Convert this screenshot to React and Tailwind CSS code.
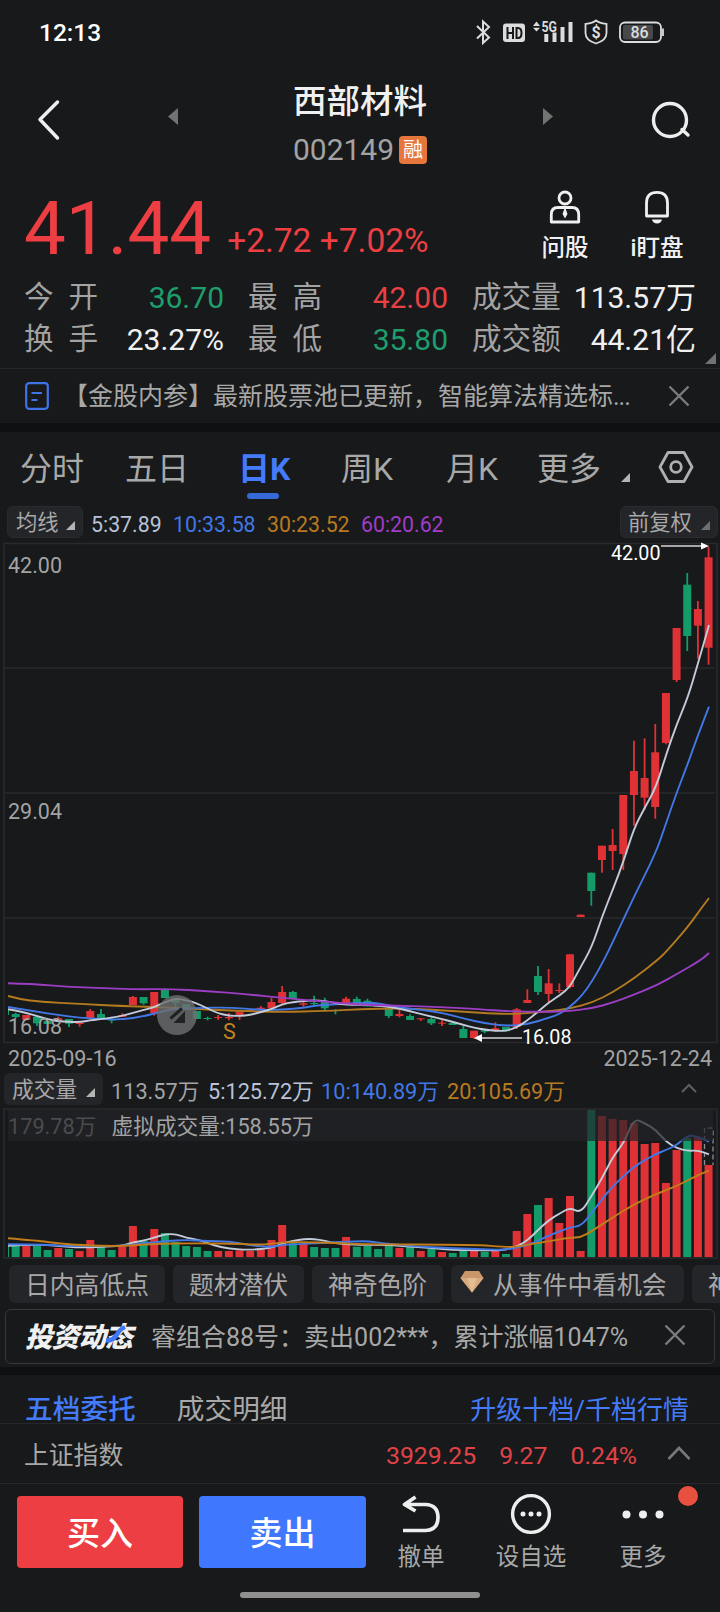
import React from "react";

const RED = "#e03236";
const GREEN = "#139c69";

// one row per day: up/down, body top, body bottom, high, low, volume bar height
const days = [
  ["g", 1010, 1015, 1010, 1015, 12],
  ["g", 1014, 1017, 1012.7, 1018.3, 12],
  ["r", 1015, 1020, 1015, 1020, 11],
  ["g", 1016.7, 1023.3, 1016, 1026, 11.3],
  ["g", 1021, 1024, 1021, 1024, 7],
  ["r", 1018.3, 1020, 1016.7, 1020, 9],
  ["g", 1019, 1023.7, 1019, 1027, 8],
  ["r", 1022.7, 1024, 1022, 1026.7, 6],
  ["r", 1011, 1018.7, 1009, 1020, 17],
  ["g", 1014, 1018.7, 1009, 1019, 10.3],
  ["g", 1019.5, 1020.5, 1016.7, 1023.3, 7],
  ["r", 1015, 1017, 1013.3, 1017, 10.3],
  ["r", 997, 1005, 996, 1005, 31],
  ["g", 997, 1003.3, 997, 1004.7, 16],
  ["r", 992, 1013, 992, 1015.7, 28],
  ["g", 990, 998, 988.3, 998, 24],
  ["g", 998, 1003, 998, 1010, 15],
  ["g", 1004, 1010, 1004, 1010, 11],
  ["g", 1011, 1019, 1011, 1019, 10],
  ["g", 1018, 1019, 1016.7, 1020.3, 6],
  ["r", 1017, 1018, 1015, 1020, 6],
  ["r", 1017, 1018.3, 1013, 1020.3, 6],
  ["r", 1011.7, 1015, 1011.7, 1020, 6.7],
  ["r", 1010, 1011, 1010, 1011, 6],
  ["r", 1007.7, 1009.7, 1006, 1011, 8.7],
  ["r", 1002, 1008.3, 997.7, 1009, 17],
  ["r", 992, 1003, 986, 1004.3, 32],
  ["g", 992, 998.7, 991, 999.3, 15.3],
  ["r", 1003.3, 1004.7, 1001.3, 1006.7, 13],
  ["g", 1003, 1004, 995.7, 1005.7, 10],
  ["g", 1001.7, 1008.3, 997.7, 1010.7, 9],
  ["g", 1010, 1011, 1009.3, 1014.3, 9],
  ["r", 998.7, 1005, 996.7, 1005, 20],
  ["g", 999, 1005, 996.7, 1005, 10.3],
  ["g", 1000.7, 1006.3, 998.7, 1006.3, 11],
  ["g", 1005, 1006.5, 1005, 1006.5, 8],
  ["g", 1008.3, 1016, 1008.3, 1018, 11],
  ["r", 1014, 1016, 1010, 1017.3, 9],
  ["g", 1016, 1020, 1014.3, 1020, 10.3],
  ["r", 1018.3, 1019.3, 1018.3, 1021, 6],
  ["g", 1019, 1023.3, 1017.3, 1025, 8],
  ["r", 1022.7, 1023.7, 1020.3, 1026, 5],
  ["g", 1023, 1025, 1022.7, 1025, 4],
  ["g", 1029, 1038, 1026, 1038, 7],
  ["r", 1030.7, 1038, 1030.7, 1039, 6],
  ["g", 1030.3, 1031.7, 1029.7, 1033.3, 5.3],
  ["r", 1028.3, 1030.7, 1022.3, 1031.7, 7],
  ["g", 1027, 1031.3, 1027, 1031.3, 3],
  ["r", 1009.3, 1027, 1008, 1029, 26],
  ["r", 1000, 1003, 989.3, 1003, 43],
  ["g", 976, 992, 966, 995, 52],
  ["r", 983.3, 994, 969, 1002, 59],
  ["r", 990, 991, 983.3, 993, 34],
  ["r", 954.3, 987, 954.3, 988.3, 61],
  ["r", 914.7, 917, 914.7, 917, 6],
  ["g", 872.7, 891, 872.7, 905.7, 147],
  ["r", 845.7, 860, 845.7, 872.7, 141],
  ["r", 845, 851, 829, 870, 138],
  ["r", 795, 854, 795, 870, 137],
  ["r", 771, 795, 740.7, 825.7, 134],
  ["r", 778, 797.7, 738.3, 810, 113],
  ["r", 752.3, 807, 724, 818.7, 114],
  ["r", 693, 743, 693, 744.3, 74],
  ["r", 628, 680, 628, 682, 107],
  ["g", 584.7, 636, 573, 651, 119],
  ["r", 609, 625.7, 601, 658.7, 119.7],
  ["r", 557.3, 647.7, 546.7, 664.7, 92],
];

const dayX = (i) => 5 + i * 10.66;

const priceLines = [
  {
    color: "#b37a1f",
    points: "8,996 20,999.3 40,1001.7 80,1004 122,1006 154,1007 197,1009 240,1011 282,1012 325,1011 360,1009.3 400,1008.3 432,1009.7 464,1011.7 496,1013.7 517,1014 549,1011.3 570,1008.7 592,1002.7 613,992.3 634,978.3 657,960.5 666,952 688,926.7 700,910 709,898",
  },
  {
    color: "#4278e6",
    points: "8,1007 37,1011.7 58,1015 80,1017.7 101,1019 122,1019.7 144,1016.3 165,1010.7 176,1008.7 197,1008 229,1007.3 261,1010 282,1009.7 304,1007.7 314,1005.7 336,1004.3 357,1003 368,1002.7 378,1003.3 400,1007.7 421,1009.7 442,1012.7 464,1018.7 485,1023.3 506,1026 528,1024.3 549,1017.7 560,1014 570,1006.7 581,996.7 592,981.7 604,960 613,941.7 634,896.7 656,852.7 666,823.3 677,791.7 688,763.3 698,735 709,706.7",
  },
  {
    color: "#c3cad9",
    points: "8,1009.3 16,1010.7 26,1012.7 37,1016 48,1019.3 58,1021.3 80,1022.3 90,1020.3 101,1019.3 122,1016 133,1012.7 144,1010 154,1007.3 165,1002 176,998.7 186,1000 197,1003.3 208,1008.7 218,1013.3 229,1015.7 240,1016 250,1015 261,1012 272,1009 282,1004.3 293,1002 304,1001 314,1000.3 325,1001 336,1003.3 346,1004.7 368,1004.7 389,1007 400,1008.7 410,1011.3 421,1014 432,1016.7 442,1019 453,1022 464,1025 474,1027.7 485,1029.7 496,1030.7 506,1031 517,1027.3 528,1020 538,1011.7 549,1002.3 560,995.3 570,986.7 579,970 592,946.7 602,916.7 613,889.3 624,860 634,828.3 645,807.3 656,787.3 666,755 677,723.3 688,697.3 698,663.3 709,625",
  },
  {
    color: "#9b3ec4",
    points: "8,983.3 33,984 67,986.7 100,988 133,989.3 170,989 207,991 247,994.3 283,998 320,1001.3 360,1004.7 400,1005.7 440,1007 480,1009.3 507,1011.3 547,1012 570,1011 592,1008.3 613,1002.7 634,994.7 656,985.7 677,974 701,960 709,953",
  },
];

const volumeLines = [
  {
    color: "#c3cad9",
    points: "8,1245.7 37,1244.3 58,1246 80,1247.7 101,1246.7 122,1246 133,1242.3 144,1240.7 154,1237.7 165,1234.3 176,1234 186,1237.7 200,1240 213,1245.3 229,1248.7 250,1250 272,1248 282,1243.3 293,1241 304,1239 314,1239 325,1240.7 336,1243.7 360,1244.7 389,1245 410,1246.7 432,1248 453,1250 475,1250.3 496,1250.3 506,1249.7 517,1246.7 528,1240 538,1230 549,1220 560,1213.3 570,1207.7 581,1213 592,1195 602,1178.3 613,1156.7 624,1142.7 634,1118.3 645,1123.3 656,1130 666,1141.7 677,1148.3 688,1151 698,1150.3 709,1154.3",
  },
  {
    color: "#4278e6",
    points: "8,1244.3 50,1244.7 67,1246 122,1246 144,1243.3 165,1241.3 187,1239.7 208,1241.3 229,1241.3 250,1245.3 272,1247.3 282,1244.7 304,1244 325,1242.7 357,1241.3 368,1241.3 389,1244 421,1246.7 453,1248.3 485,1249.3 506,1250 528,1245 538,1241 549,1235.3 560,1231.3 570,1227.3 581,1226 592,1212.7 602,1199.3 613,1186 624,1175.7 634,1166.7 645,1160 656,1154 666,1150 677,1145 688,1135 698,1136.7 709,1141.7",
  },
  {
    color: "#c27d18",
    points: "8,1238.3 37,1240.7 58,1243.3 80,1245.3 122,1246.3 154,1243.7 197,1243.3 240,1243.7 261,1245 282,1242.3 304,1242 336,1243 360,1244.3 475,1244.7 506,1247 517,1246.7 549,1241 570,1237.7 581,1237.3 592,1231 613,1217.3 634,1204.3 656,1194 677,1186 698,1175 709,1170.7",
  },
];

// smooth a list of "x,y" pairs with quadratic segments through the midpoints
const smooth = (points) => {
  const p = points.split(" ").map((s) => s.split(",").map(Number));
  let d = `M${p[0][0]} ${p[0][1]}`;
  for (let i = 1; i < p.length - 1; i++) {
    const mx = (p[i][0] + p[i + 1][0]) / 2;
    const my = (p[i][1] + p[i + 1][1]) / 2;
    d += ` Q${p[i][0]} ${p[i][1]} ${mx} ${my}`;
  }
  const last = p[p.length - 1];
  return `${d} L${last[0]} ${last[1]}`;
};

const Corner = ({ className = "", color = "#b4b4b4", size = 9 }) => (
  <svg width={size} height={size} viewBox="0 0 10 10" className={`shrink-0 ${className}`}>
    <path d="M10 0V10H0Z" fill={color} />
  </svg>
);

const Close = ({ className = "", color = "#7b7c7e" }) => (
  <svg width="22" height="22" viewBox="0 0 22 22" className={`shrink-0 ${className}`}>
    <path d="M1.5 1.5L20.5 20.5M20.5 1.5L1.5 20.5" stroke={color} strokeWidth="2.4" fill="none" />
  </svg>
);

const StatusBar = () => (
  <div className="h-16 flex items-center pl-[39px] pr-[55px] text-white">
    <span className="pt-[2px] text-[24.5px] leading-none font-medium">12:13</span>
    <svg width="190" height="28" viewBox="476 18 190 28" className="ml-auto" fill="none" stroke="#dcdcdc">
      <path d="M478 26L490 37.5L484 43V21.5L490 27L478 38.5" strokeWidth="2" />
      <rect x="504" y="23.5" width="22" height="18.5" rx="3" fill="#dcdcdc" stroke="none" />
      <path d="M508.5 27V39M514 27V39M508.5 33H514M517.5 28V38H519C521.5 38 522.5 36.5 522.5 33S521.5 28 519 28Z" stroke="#17191a" strokeWidth="2" />
      <path d="M534 26L537.5 21.5L541 26ZM534 27.8H541L537.5 31.5Z" fill="#dcdcdc" stroke="none" />
      <text x="542.5" y="31.5" fontSize="14.5" fontWeight="700" fill="#dcdcdc" stroke="none" textLength="15.5" lengthAdjust="spacingAndGlyphs">5G</text>
      <path d="M547.3 34V42M555.5 32.5V42M563.5 27V42M571.5 22V42" strokeWidth="4" />
      <path d="M597 20.5C600 23 604 23.5 607.5 24V33C607.5 38.5 602 42 597 43.5C592 42 586.5 38.5 586.5 33V24C590 23.5 594 23 597 20.5Z" strokeWidth="1.8" />
      <text x="597" y="38" fontSize="16" fontWeight="700" fill="#dcdcdc" stroke="none" textAnchor="middle">$</text>
      <rect x="621" y="22.5" width="41" height="19.5" rx="5" strokeWidth="1.8" />
      <rect x="624" y="25" width="30" height="14.5" rx="2" fill="#47484a" stroke="none" />
      <path d="M664 28.5V36" strokeWidth="1.8" />
      <text x="640.5" y="38" fontSize="16" fontWeight="500" fill="#dcdcdc" stroke="none" textAnchor="middle">86</text>
    </svg>
  </div>
);

const Header = () => (
  <div className="h-[116px] flex items-start justify-between pl-[37px] pr-[28px]">
    <svg width="24" height="42" viewBox="0 0 24 42" className="mt-[35px]">
      <path d="M20.5 3L3 20.5L20.5 39" stroke="#eee" strokeWidth="3.5" strokeLinecap="round" strokeLinejoin="round" fill="none" />
    </svg>
    <svg width="10" height="17" viewBox="0 0 10 17" className="mt-11 ml-[56px]">
      <path d="M10 0V17L0 8.5Z" fill="#737373" />
    </svg>
    <div className="w-[144px] ml-[60px] flex flex-col items-center">
      <h1 className="mt-[18px] text-[33.5px] leading-[40px] font-medium text-[#f0f0f0] whitespace-nowrap">西部材料</h1>
      <div className="mt-[7px] flex items-center gap-[5px]">
        <span className="pt-px text-[30px] leading-[40px] text-[#a3a3a3]">002149</span>
        <span className="size-7 rounded bg-[#e6763c] text-[20px] leading-[29px] text-center text-white">融</span>
      </div>
    </div>
    <svg width="10" height="17" viewBox="0 0 10 17" className="mt-11 ml-[60px]">
      <path d="M0 0V17L10 8.5Z" fill="#737373" />
    </svg>
    <svg width="42" height="40" viewBox="0 0 42 40" className="mt-9 ml-[47px]" fill="none" stroke="#eee" strokeWidth="3.4">
      <circle cx="20" cy="20" r="16.5" />
      <path d="M32 29.5L38 35" strokeLinecap="round" />
    </svg>
  </div>
);

const Price = () => (
  <div className="h-[88px] flex pl-[24px]">
    <div className="flex items-baseline text-[#ed3f43] whitespace-nowrap w-[516px] pt-1">
      <span className="text-[74.5px] leading-[90px]">41.44</span>
      <span className="ml-[16px] text-[33.5px] relative top-[-2px]">+2.72 +7.02%</span>
    </div>
    <div className="w-[50px] pt-[10px] flex flex-col items-center text-[#f0f0f0]">
      <svg width="32" height="34" viewBox="0 0 32 34" fill="none" stroke="#f0f0f0" strokeWidth="2.8">
        <circle cx="16" cy="8" r="6" />
        <path d="M2.3 32V24.5Q2.3 17.5 9 17.5H23Q29.7 17.5 29.7 24.5V32Z" strokeLinejoin="round" />
        <path d="M16 17L18.5 24L16 28.5L13.5 24Z" fill="#f0f0f0" stroke="none" />
      </svg>
      <span className="mt-[8px] text-[23.5px] leading-[32px] font-medium whitespace-nowrap">问股</span>
    </div>
    <div className="ml-[39px] w-[56px] pt-[10px] flex flex-col items-center text-[#f0f0f0]">
      <svg width="28" height="34" viewBox="0 0 28 34" fill="none" stroke="#f0f0f0" strokeWidth="2.8">
        <path d="M3.5 26V13Q3.5 2.3 14 2.3T24.5 13V26Z" strokeLinejoin="round" />
        <path d="M9 29.5H19Q18 33.5 14 33.5T9 29.5Z" fill="#f0f0f0" stroke="none" />
      </svg>
      <span className="mt-[8px] text-[23.5px] leading-[32px] font-medium whitespace-nowrap">i盯盘</span>
    </div>
  </div>
);

const quotes = [
  [["今", "开", "36.70", "text-[#1f9e6d]"], ["最", "高", "42.00", "text-[#e64145]"], ["成交量", "", "113.57万", "text-[#f0f0f0]"]],
  [["换", "手", "23.27%", "text-[#f0f0f0]"], ["最", "低", "35.80", "text-[#1f9e6d]"], ["成交额", "", "44.21亿", "text-[#f0f0f0]"]],
];

const Quotes = () => (
  <div className="relative h-[101px] pt-[9px] pl-[24px] pr-[24px] border-b border-[#27282b]">
    {quotes.map((row, i) => (
      <div key={i} className="h-[42.3px] grid grid-cols-[200px_200px_1fr] gap-x-6 items-center text-[30px] leading-none whitespace-nowrap">
        {row.map(([a, b, value, color]) => (
          <div key={a + b} className="flex justify-between">
            <span className="flex gap-[15px] text-[29.6px] text-[#a3a3a3]">
              <span>{a}</span>
              {b && <span>{b}</span>}
            </span>
            <span className={color}>{value}</span>
          </div>
        ))}
      </div>
    ))}
    <Corner className="absolute right-1 bottom-[4px]" size={11} color="#737373" />
  </div>
);

const Notice = () => (
  <div className="h-[54px] flex items-center pl-[25px] pr-[30px]">
    <svg width="24" height="28" viewBox="0 0 24 28" fill="none" stroke="#3f73e8" strokeWidth="2.2">
      <rect x="1.2" y="1.2" width="21.6" height="25.6" rx="3" />
      <path d="M6.5 11H17M6.5 18H12.5" />
    </svg>
    <span className="ml-[14px] w-[580px] pt-[2px] text-[25px] leading-[36px] text-[#a8a8a8] whitespace-nowrap">
      【金股内参】最新股票池已更新，智能算法精选标<span className="tracking-[-1px]">...</span>
    </span>
    <Close className="ml-auto" />
  </div>
);

const Tabs = () => (
  <div className="h-[74px] flex text-[32px] leading-[74px] text-[#a8a8a8] whitespace-nowrap pl-[20px]">
    <span className="w-[105px]">分时</span>
    <span className="w-[113px]">五日</span>
    <span className="relative w-[103px] font-bold text-[#437bfb]">
      日K
      <span className="absolute left-[9px] bottom-[7px] w-8 h-[6px] rounded-full bg-[#3569d8]" />
    </span>
    <span className="w-[105px]">周K</span>
    <span className="w-[91px]">月K</span>
    <span>更多</span>
    <Corner className="ml-[20px] mt-[41px]" />
    <svg width="36" height="34" viewBox="0 0 36 34" className="ml-[28px] mt-[18px]" fill="none" stroke="#b0b0b0" strokeWidth="2.8" strokeLinejoin="round">
      <path d="M10 2.5H26L34 17L26 31.5H10L2 17Z" />
      <circle cx="18" cy="17" r="5.3" />
    </svg>
  </div>
);

const Averages = () => (
  <div className="h-[34px] flex items-start pl-[7px] pr-[2px] text-[21.3px] leading-[32px] whitespace-nowrap">
    <div className="w-[76px] h-8 rounded-md bg-[#242528] border border-[#2a2b2e] flex items-center pl-[8px] text-[#a8a8a8]">
      <span className="pt-[2px]">均线</span>
      <Corner className="ml-[7px] mt-[6px]" />
    </div>
    <span className="ml-2 w-[82px] pt-[3px] text-[#b9c2d8]">5:37.89</span>
    <span className="w-[94px] pt-[3px] text-[#4278e6]">10:33.58</span>
    <span className="w-[94px] pt-[3px] text-[#b87a20]">30:23.52</span>
    <span className="pt-[3px] text-[#a03cc8]">60:20.62</span>
    <div className="ml-auto w-[98px] h-8 rounded-md bg-[#242528] border border-[#2a2b2e] flex items-center pl-[7px] text-[#a8a8a8]">
      <span className="pt-[2px]">前复权</span>
      <Corner className="ml-[9px] mt-[6px]" color="#6f6f6f" />
    </div>
  </div>
);

const CandleChart = () => (
  <svg width="720" height="507" viewBox="0 540 720 507" className="block">
    <g fill="none" stroke="#292a2d" strokeWidth="1.6">
      <rect x="4" y="543.5" width="713" height="499" />
      <path d="M4 668H715M4 793H715M4 918H715" />
    </g>
    <clipPath id="plot">
      <rect x="8" y="540" width="706" height="505" />
    </clipPath>
    <g clipPath="url(#plot)">
      {days.map(([dir, top, bottom, high, low], i) => (
        <g key={i} fill={dir === "r" ? RED : GREEN}>
          <rect x={dayX(i) - 4} y={top} width="8" height={bottom - top} />
          <rect x={dayX(i) - 0.9} y={high} width="1.8" height={low - high} />
        </g>
      ))}
    </g>
    <g fill="none" strokeWidth="1.9" strokeLinejoin="round">
      {priceLines.map(({ color, points }) => (
        <path key={color} d={smooth(points)} stroke={color} />
      ))}
    </g>
    <circle cx="177" cy="1015" r="20" fill="#6d6e6f" fillOpacity="0.8" />
    <path d="M170.5 1018.5L182 1008.5" stroke="#202122" strokeWidth="3" />
    <path d="M185 1011V1023H173.5Z" fill="#202122" />
    <g fontSize="21.5" fill="#a3a3a3">
      <text x="8" y="573">42.00</text>
      <text x="8" y="819">29.04</text>
      <text x="8" y="1034">16.08</text>
      <text x="223" y="1039" fill="#c5841f">S</text>
      <text x="611" y="560" fill="#fff" fontSize="19.7">42.00</text>
      <text x="522" y="1044" fill="#fff" fontSize="19.7">16.08</text>
    </g>
    <path d="M661 546H702M482 1038H522" stroke="#a5a5a5" strokeWidth="1.8" />
    <path d="M701 542.5L709 546L701 549.5ZM482 1034L474 1038L482 1042Z" fill="#fff" />
  </svg>
);

const VolumeHeader = () => (
  <>
    <div className="h-[26px] px-2 flex justify-between text-[21.5px] leading-[24px] text-[#a3a3a3]">
      <span>2025-09-16</span>
      <span>2025-12-24</span>
    </div>
    <div className="h-[34px] flex items-start pl-1 pr-[23px] text-[21.7px] leading-[32px] whitespace-nowrap">
      <div className="w-[99px] h-8 rounded-md bg-[#242528] flex items-center pl-[8px] text-[#a8a8a8]">
        <span className="pt-[2px]">成交量</span>
        <Corner className="ml-[9px] mt-[6px]" />
      </div>
      <span className="ml-[8px] w-[97px] pt-[3px] text-[#a3a3a3]">113.57万</span>
      <span className="w-[113px] pt-[3px] text-[#b9c2d8]">5:125.72万</span>
      <span className="w-[126px] pt-[3px] text-[#4278e6]">10:140.89万</span>
      <span className="pt-[3px] text-[#b87a20]">20:105.69万</span>
      <svg width="16" height="10" viewBox="0 0 16 10" className="ml-auto mt-[10px]">
        <path d="M1 9L8 2L15 9" fill="none" stroke="#5c5f66" strokeWidth="2" />
      </svg>
    </div>
  </>
);

const VolumeChart = () => (
  <svg width="720" height="153" viewBox="0 1107 720 153" className="block">
    <rect x="4" y="1109" width="713" height="149" fill="none" stroke="#292a2d" strokeWidth="1.6" />
    <clipPath id="volume">
      <rect x="8" y="1109" width="706" height="149" />
    </clipPath>
    <g clipPath="url(#volume)">
      {days.map((day, i) => (
        <rect key={i} x={dayX(i) - 4} y={1257 - day[5]} width="8" height={day[5]} fill={day[0] === "r" ? RED : GREEN} />
      ))}
    </g>
    <path d="M704.5 1165V1128H713V1165" fill="none" stroke="#8c8d8f" strokeWidth="1.3" strokeDasharray="5 3" />
    <g fill="none" strokeWidth="1.9" strokeLinejoin="round">
      {volumeLines.map(({ color, points }) => (
        <path key={color} d={smooth(points)} stroke={color} />
      ))}
    </g>
    <rect x="8" y="1110" width="705" height="31" fill="#232428" fillOpacity="0.7" />
    <g fontSize="21.7">
      <text x="8" y="1133.5" fill="#4b4c4e">179.78万</text>
      <text x="111.5" y="1134" fill="#a3a3a3">虚拟成交量:158.55万</text>
    </g>
  </svg>
);

const Diamond = () => (
  <svg width="24" height="22" viewBox="0 0 24 22" className="ml-[9px] mr-[9px] mb-[4px] shrink-0">
    <path d="M5 0H19L23.5 7L12 21.5L0.5 7Z" fill="#c9976a" />
    <path d="M0.5 7H23.5L12 21.5Z" fill="#d6aa7c" />
    <path d="M7 7H17L12 21.5Z" fill="#e2bd92" />
  </svg>
);

const Chips = () => (
  <div className="h-[43px] pt-[5px] pl-[9px] flex gap-2 overflow-hidden text-[24.8px] leading-[41px] text-[#a8a8a8] whitespace-nowrap">
    <div className="h-[38px] shrink-0 rounded-md bg-[#242528] w-[156px] text-center">日内高低点</div>
    <div className="h-[38px] shrink-0 rounded-md bg-[#242528] w-[131px] text-center">题材潜伏</div>
    <div className="h-[38px] shrink-0 rounded-md bg-[#242528] w-[131px] text-center">神奇色阶</div>
    <div className="h-[38px] shrink-0 rounded-md bg-[#242528] w-[233px] flex items-center">
      <Diamond />
      <span className="pt-[2px]">从事件中看机会</span>
    </div>
    <div className="h-[38px] shrink-0 rounded-md bg-[#242528] w-[131px] pl-4">神奇色阶</div>
  </div>
);

const Feed = () => (
  <div className="mt-[6px] mx-[5px] h-[55px] rounded-md border border-[#38393c] flex items-center whitespace-nowrap">
    <div className="relative ml-[19px] w-[126px] pt-[2px] text-[27.5px] leading-[32px] font-black italic text-[#f0f0f0] tracking-[-0.8px]">
      投资动态
      <svg width="24" height="20" viewBox="0 0 24 20" className="absolute left-[80px] top-[4px]">
        <path d="M1 16.500Q8 17 12 10.500Q15 5 20 3" fill="none" stroke="#3f78f5" strokeWidth="4.5" />
      </svg>
    </div>
    <span className="pt-[2px] text-[25px] leading-[36px] text-[#a8a8a8]">睿组合88号：卖出002***，累计涨幅1047%</span>
    <Close className="ml-auto mr-[28px] mb-[3px]" />
  </div>
);

const IndexBar = () => (
  <>
    <div className="h-[49px] pl-[25px] pr-[31px] flex items-center border-b border-[#27282b] text-[27.7px] leading-none whitespace-nowrap pt-[21px]">
      <span className="font-medium text-[#437bfb]">五档委托</span>
      <span className="ml-[41px] text-[#a8a8a8]">成交明细</span>
      <span className="ml-auto text-[26px] text-[#437bfb]">升级十档/千档行情</span>
    </div>
    <div className="h-[60px] pl-[24px] pr-[29px] flex items-center border-b border-[#27282b] text-[24.8px] text-[#e04347] whitespace-nowrap pt-[5px]">
      <span className="text-[#a8a8a8]">上证指数</span>
      <span className="ml-auto">3929.25</span>
      <span className="ml-[23px]">9.27</span>
      <span className="ml-[23px]">0.24%</span>
      <svg width="24" height="14" viewBox="0 0 24 14" className="ml-[30px] mb-[7px]">
        <path d="M1.5 13L12 2L22.5 13" fill="none" stroke="#77787a" strokeWidth="2.6" />
      </svg>
    </div>
  </>
);

const Actions = () => (
  <div className="relative h-[96px] pl-[17px] pt-[12px] flex text-[23.5px] leading-[32px] text-[#a8a8a8] whitespace-nowrap">
    <button className="w-[166px] h-[72px] pt-[3px] rounded bg-[#ed3f43] text-[33px] font-medium text-white">买入</button>
    <button className="ml-4 w-[167px] h-[72px] pt-[3px] rounded bg-[#3f78ff] text-[33px] font-medium text-white">卖出</button>
    <div className="ml-[25px] w-[60px] flex flex-col items-center">
      <svg width="42" height="40" viewBox="0 0 42 40" className="mt-[-1px]" fill="none" stroke="#eee" strokeWidth="3.7">
        <path d="M15.5 2L4.5 9.5L15.5 16M4.5 9.5H25.5Q38 10 38 22.500T25.5 35.500H3" strokeLinejoin="round" />
      </svg>
      <span className="mt-[6px]">撤单</span>
    </div>
    <div className="ml-[40px] w-[80px] flex flex-col items-center">
      <svg width="42" height="42" viewBox="0 0 42 42" className="mt-[-3px]">
        <circle cx="21" cy="21" r="18.4" fill="none" stroke="#eee" strokeWidth="3.4" />
        <path d="M13 21H13.01M21 21H21.01M29 21H29.01" stroke="#eee" strokeWidth="5" strokeLinecap="round" />
      </svg>
      <span className="mt-[6px]">设自选</span>
    </div>
    <div className="ml-[42px] w-[60px] flex flex-col items-center">
      <svg width="42" height="40" viewBox="0 0 42 40" className="mt-[-1px]" fill="#eee">
        <circle cx="4.5" cy="19.5" r="4" />
        <circle cx="21" cy="19.5" r="4" />
        <circle cx="37.5" cy="19.5" r="4" />
      </svg>
      <span className="mt-[6px]">更多</span>
    </div>
    <span className="absolute left-[678px] top-[2px] size-5 rounded-full bg-[#e85040]" />
  </div>
);

const App = () => {
  return (
    <div className="w-[720px] h-[1612px] overflow-hidden bg-[#17191a] font-[Roboto,'Noto_Sans_CJK_SC',sans-serif]">
      <StatusBar />
      <Header />
      <Price />
      <Quotes />
      <Notice />
      <div className="h-[9px] bg-[#0f1012]" />
      <Tabs />
      <Averages />
      <CandleChart />
      <VolumeHeader />
      <VolumeChart />
      <Chips />
      <Feed />
      <div className="mt-[3px] h-[8px] bg-[#0f1012]" />
      <IndexBar />
      <Actions />
      <div className="mt-[12px] mx-auto w-60 h-[6px] rounded-full bg-[#909090]" />
    </div>
  );
};

export default App;
